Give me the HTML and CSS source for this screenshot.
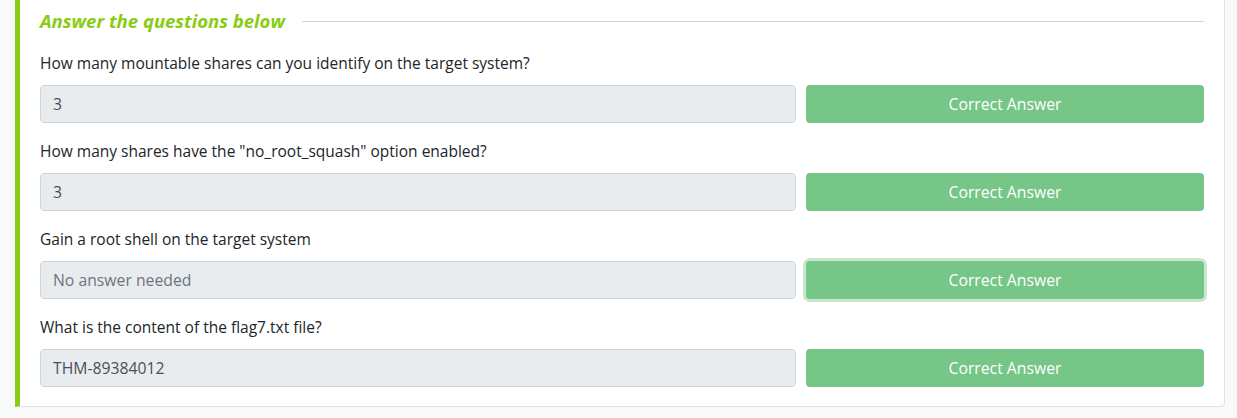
FILE: index.html
```html
<!DOCTYPE html>
<html>
<head>
<meta charset="utf-8">
<link rel="stylesheet" href="styles.css">
</head>
<body>
<div class="page">
  <section class="card">
    <div class="heading-row">
      <h2 class="heading">Answer the questions below</h2>
      <div class="heading-line"></div>
    </div>
    <div class="question">
      <p class="label">How many mountable shares can you identify on the target system?</p>
      <div class="answer-row">
        <div class="answer">3</div>
        <button class="btn">Correct Answer</button>
      </div>
    </div>
    <div class="question">
      <p class="label">How many shares have the "no_root_squash" option enabled?</p>
      <div class="answer-row">
        <div class="answer">3</div>
        <button class="btn">Correct Answer</button>
      </div>
    </div>
    <div class="question">
      <p class="label">Gain a root shell on the target system</p>
      <div class="answer-row">
        <div class="answer placeholder">No answer needed</div>
        <button class="btn focused">Correct Answer</button>
      </div>
    </div>
    <div class="question">
      <p class="label">What is the content of the flag7.txt file?</p>
      <div class="answer-row">
        <div class="answer">THM-89384012</div>
        <button class="btn">Correct Answer</button>
      </div>
    </div>
  </section>
</div>
</body>
</html>
```

FILE: styles.css
```css
* { box-sizing: border-box; }
html, body {
  margin: 0;
  padding: 0;
  background: #f8f9fa;
  font-family: "Open Sans", "Noto Sans", sans-serif;
}
.page {
  padding-left: 15px;
  width: 1225px;
}
.card {
  background: #ffffff;
  border: 1px solid #dee2e6;
  border-top: 0;
  border-left: 5px solid #88cc14;
  border-radius: 0 0 4px 0;
  padding: 8px 20px 19px 20px;
}
.heading-row {
  display: flex;
  align-items: center;
  gap: 17px;
  height: 26px;
  margin-bottom: 18px;
}
.heading {
  margin: 0;
  font-size: 18.5px;
  font-style: italic;
  font-weight: 700;
  color: #88cc14;
  line-height: 26px;
  white-space: nowrap;
}
.heading-line {
  flex: 1;
  height: 1px;
  background: #cfd3d6;
}
.question { margin-bottom: 17px; }
.question:last-child { margin-bottom: 0; }
.label {
  margin: 0 0 11px 0;
  font-size: 15.5px;
  line-height: 22px;
  color: #212529;
}
.answer-row {
  display: flex;
  gap: 10px;
}
.answer {
  width: 756px;
  height: 38px;
  background: #e9ecef;
  border: 1px solid #ced4da;
  border-radius: 4px;
  padding: 0 12px;
  display: flex;
  align-items: center;
  font-size: 15.75px;
  color: #495057;
}
.answer.placeholder { color: #6c757d; }
.btn {
  flex: 1;
  height: 38px;
  background: #75c687;
  border: 0;
  border-radius: 4px;
  color: #ffffff;
  font-family: inherit;
  font-size: 15.75px;
  padding: 0;
}
.btn.focused {
  box-shadow: 0 0 0 3px #c6e8cd;
}
```
